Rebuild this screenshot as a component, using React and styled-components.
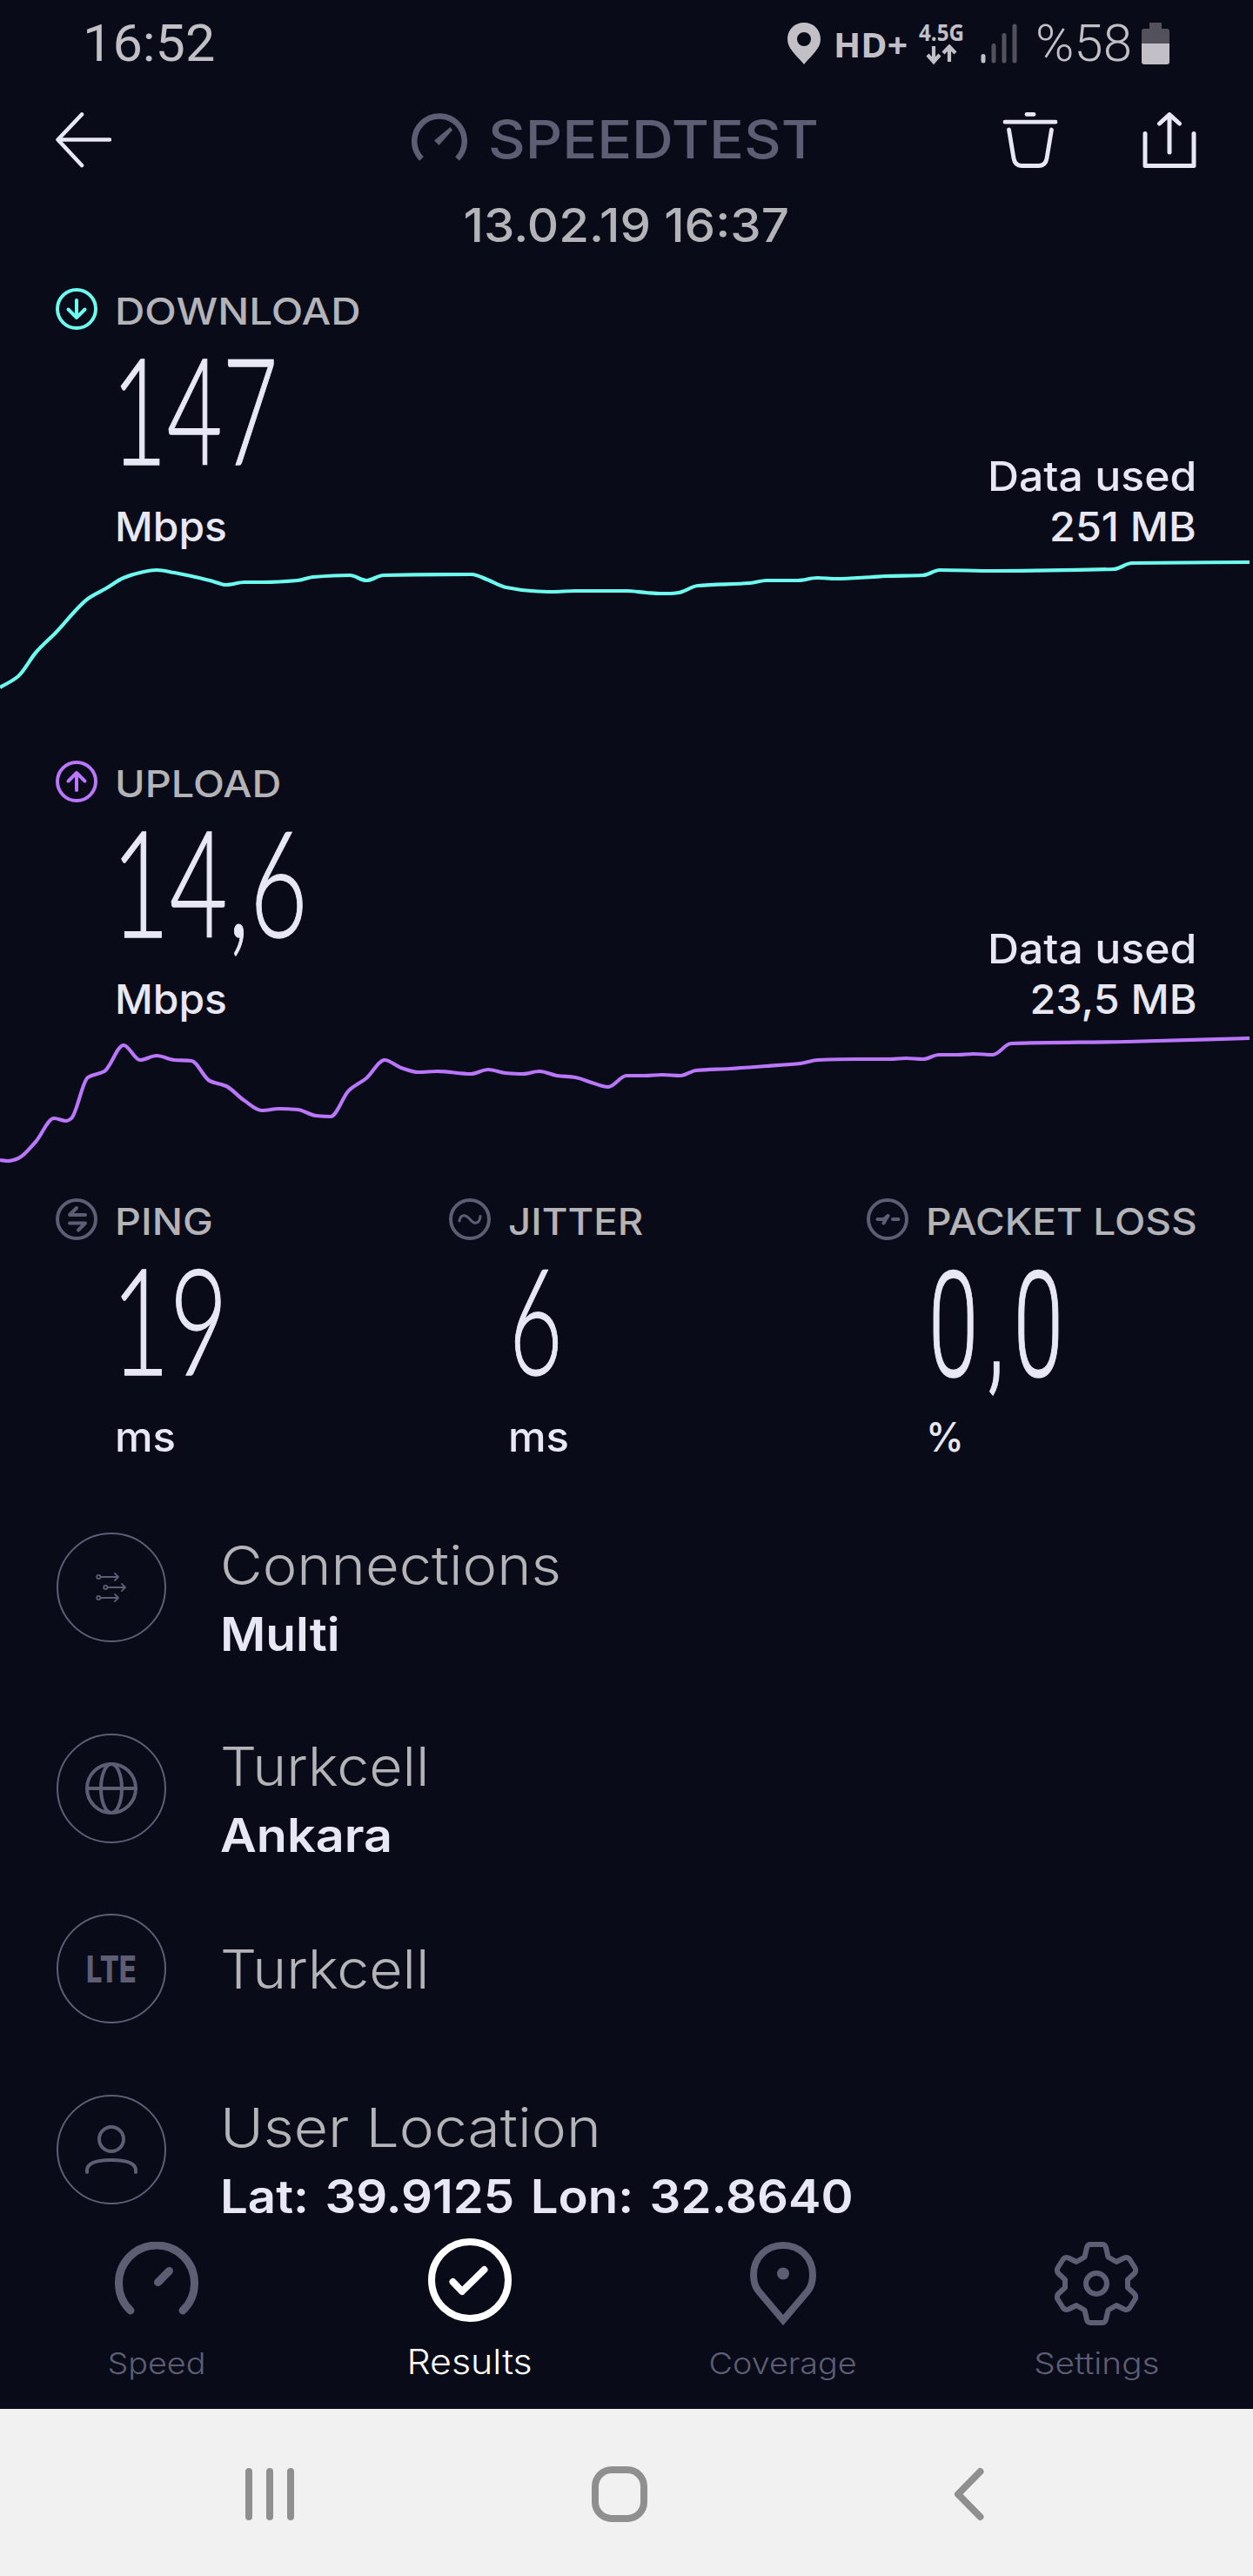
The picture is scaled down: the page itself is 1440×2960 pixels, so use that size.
import React from "react";
import styled, { createGlobalStyle, css } from "styled-components";

const color = {
  bg: "#090b19",
  dim: "#5d5e73",
  label: "#b3b3b8",
  text: "#e8e7f4",
  status: "#c2c0c6",
  statusDim: "#53525c",
  download: "#6dfbf0",
  upload: "#bb77fb",
  nav: "#f1f1f1",
  navIcon: "#8f8f8f",
};

const GlobalStyle = createGlobalStyle`
  body { margin: 0; background: ${color.bg}; }
  * { box-sizing: border-box; }
  svg { display: block; flex: none; }
`;

const Screen = styled.div`
  width: 1440px;
  height: 2960px;
  display: flex;
  flex-direction: column;
  overflow: hidden;
  background: ${color.bg};
  font-family: Inter, "Open Sans", sans-serif;
  color: ${color.text};
`;

/* Text drawn slightly wider or narrower than the family's natural width */
const stretched = css`
  display: block;
  width: max-content;
  white-space: nowrap;
  transform: scaleX(${(p) => p.$stretch || 1});
  transform-origin: ${(p) => p.$origin || "left"} center;
`;

/* ---------- status bar ---------- */

const StatusBar = styled.header`
  height: 100px;
  flex: none;
  display: flex;
  align-items: center;
  justify-content: space-between;
  padding: 0 96px 0 95px;
  color: ${color.status};
`;

const Clock = styled.span`
  ${stretched}
  font: 400 60px/100px Roboto, sans-serif;
`;

const StatusIcons = styled.div`
  display: flex;
  align-items: center;
  height: 100px;
`;

const HdLabel = styled.span`
  ${stretched}
  width: 81px;
  margin: 0 17px 0 15px;
  font: 700 39px/97px "Open Sans", sans-serif;
`;

const NetworkType = styled.div`
  display: flex;
  flex-direction: column;
  align-items: center;
  width: 52px;
  height: 50px;
  margin-right: 19px;
`;

const NetworkLabel = styled.span`
  ${stretched}
  margin-bottom: 2px;
  font: 700 26px/24px "Open Sans", sans-serif;
`;

const Percent = styled.span`
  ${stretched}
  width: 107px;
  margin: 0 15px 0 21px;
  font: 350 60px/100px Roboto, sans-serif;
`;

/* ---------- header ---------- */

const Header = styled.div`
  height: 120px;
  flex: none;
  display: grid;
  grid-template-columns: 1fr auto 1fr;
  align-items: center;
  padding: 0 64px;
`;

const Brand = styled.div`
  display: flex;
  align-items: center;
  width: 494px;
  gap: 24px;
  color: ${color.dim};
`;

const BrandName = styled.span`
  ${stretched}
  font-size: 61px;
  line-height: 121px;
  font-weight: 500;
`;

const Actions = styled.div`
  display: flex;
  justify-content: flex-end;
  gap: 96px;
`;

const TestDate = styled.div`
  ${stretched}
  align-self: center;
  flex: none;
  padding-top: 1px;
  font-size: 53px;
  line-height: 76px;
  font-weight: 550;
  color: ${color.label};
`;

/* ---------- measurements ---------- */

const SpeedBlock = styled.section`
  flex: none;
  padding-top: 34px;
`;

const SpeedRow = styled.div`
  display: flex;
  justify-content: space-between;
  align-items: flex-end;
  padding: 0 65px 0 64px;
`;

const Metric = styled.div`
  display: flex;
  gap: 20px;
`;

const MetricBody = styled.div`
  height: 303px;
`;

const Label = styled.div`
  ${stretched}
  font-size: 43px;
  line-height: 53px;
  font-weight: 500;
  color: ${color.label};
`;

const Value = styled.div`
  ${stretched}
  margin: -6px 0 16px ${(p) => p.$shift}px;
  font-family: Lato, sans-serif;
  font-weight: 300;
  font-size: 169px;
  line-height: 182px;
  -webkit-text-stroke: 1.300px currentColor;
  ${(p) =>
    p.$straight &&
    css`
      margin: 2px 0 8px ${p.$shift}px;
      font-family: Roboto, sans-serif;
      letter-spacing: 17px;
    `}
`;

const Unit = styled.div`
  ${stretched}
  font-size: 47px;
  line-height: 58px;
  font-weight: 550;
`;

const DataUsed = styled.div`
  display: flex;
  flex-direction: column;
  align-items: flex-end;
`;

const Metrics = styled.section`
  flex: none;
  display: grid;
  grid-template-columns: 452px 480px 1fr;
  padding: 35px 0 0 64px;
`;

/* ---------- connection details ---------- */

const Details = styled.section`
  flex: none;
  display: flex;
  flex-direction: column;
  height: 884px;
  padding: 78px 0 0 65px;
`;

const DetailRow = styled.div`
  display: flex;
  align-items: ${(p) => (p.$single ? "center" : "flex-start")};
  margin-bottom: ${(p) => p.$after || 0}px;
`;

const Badge = styled.div`
  flex: none;
  display: flex;
  align-items: center;
  justify-content: center;
  width: 126px;
  height: 126px;
  margin: ${(p) => (p.$single ? 0 : 3)}px 62px 0 0;
  border: 2px solid ${color.dim};
  border-radius: 50%;
  color: ${color.dim};
`;

const BadgeText = styled.span`
  ${stretched}
  font-size: 43px;
  font-weight: 800;
  line-height: 48px;
`;

const DetailTitle = styled.div`
  ${stretched}
  font-size: 62px;
  line-height: 81px;
  margin-bottom: -1px;
  font-weight: 330;
  color: ${color.label};
`;

const DetailValue = styled.div`
  ${stretched}
  font-size: 53px;
  line-height: 81px;
  word-spacing: 4px;
  font-weight: 600;
`;

/* ---------- tab bar and system navigation ---------- */

const TabBar = styled.nav`
  flex: none;
  height: 204px;
  display: grid;
  grid-template-columns: repeat(4, 1fr);
`;

const Tab = styled.div`
  display: flex;
  flex-direction: column;
  align-items: center;
  gap: ${(p) => (p.$active ? 18 : 16)}px;
  padding-top: ${(p) => (p.$active ? 8 : 12)}px;
  color: ${(p) => (p.$active ? "#fff" : color.dim)};
`;

const TabLabel = styled.span`
  ${stretched}
  font-size: ${(p) => (p.$active ? 39 : 34)}px;
  line-height: 56px;
  font-weight: ${(p) => (p.$active ? 360 : 330)};
`;

const SystemNav = styled.footer`
  flex: none;
  height: 192px;
  display: grid;
  grid-template-columns: 401px 415px auto;
  align-items: center;
  padding: 4px 0 0 278px;
  background: ${color.nav};
  color: ${color.navIcon};
`;

/* ---------- icons ---------- */

const Icon = ({ w, h = w, sw = 4, children, ...rest }) => (
  <svg width={w} height={h} viewBox={`0 0 ${w} ${h}`} fill="none" stroke="currentColor" strokeWidth={sw} strokeLinecap="round" strokeLinejoin="round" {...rest}>
    {children}
  </svg>
);

const PinSolid = () => (
  <Icon w={38} h={48} stroke="none">
    <path fill="currentColor" fillRule="evenodd" d="M19 0C8 0 0 8 0 19C0 30 10 37 19 48C28 37 38 30 38 19C38 8 30 0 19 0ZM19 11a8 8 0 1 1 0 16a8 8 0 1 1 0-16Z" />
  </Icon>
);

const DataArrows = () => (
  <Icon w={36} h={24} sw={4.200} strokeLinecap="butt" strokeLinejoin="miter">
    <path d="M9 2V19M2 12L9 20L16 12M27 20V3M20 10L27 2.500L34 10" />
  </Icon>
);

const Signal = () => (
  <Icon w={42} h={46} sw={5} color={color.statusDim}>
    <path d="M3 37.500V43" stroke={color.status} />
    <path d="M15 25.500V43M27 13.500V43M39 3V43" />
  </Icon>
);

const Battery = () => (
  <Icon w={32} h={48} stroke="none">
    <path fill={color.statusDim} d="M9 0H23V7H29Q32 7 32 10V24H0V10Q0 7 3 7H9Z" />
    <path fill="currentColor" d="M0 24H32V45Q32 48 29 48H3Q0 48 0 45Z" />
  </Icon>
);

const BackArrow = () => (
  <Icon w={64} h={64} sw={4.600}>
    <path d="M62 31.500H3M30 2.500L2.500 31.500L30 61" />
  </Icon>
);

const BrandGauge = () => (
  <Icon w={64} h={64} sw={6.500} strokeLinecap="butt">
    <path d="M11.500 53.500A28.800 28.800 0 1 1 52.500 53.500" />
    <path stroke="none" fill="currentColor" d="M26 32.500L44.500 17L47 20.500L31.500 38Z" />
  </Icon>
);

const Trash = () => (
  <Icon w={64} h={64} sw={4.800}>
    <path d="M28 2.400H36" />
    <path d="M3 11.200H61M7.500 20L13 53Q14.500 61.500 22 61.500H42Q49.500 61.500 51 53L56.500 20" />
  </Icon>
);

const Share = () => (
  <Icon w={64} h={64} sw={5}>
    <path d="M4 24.500V61.500H60V24.500M32 46V3M20.500 13L32 2.600L43.500 13" />
  </Icon>
);

const Ring = ({ tint, children }) => (
  <Icon w={48} sw={4} color={tint}>
    <circle cx="24" cy="24" r="22" />
    {children}
  </Icon>
);

const glyph = {
  down: <path d="M24 14V34M14.500 24.500L24 34L33.500 24.500" />,
  up: <path d="M24 34V14M14.500 23.500L24 14L33.500 23.500" />,
  ping: <path d="M34 19H16L24 11M16 28.500H34L26 36.500" />,
  jitter: <path strokeWidth="3" d="M12 26C13 18 19 18 24 24S35 30 36 20.500" />,
  loss: <path d="M12.500 24H19.500L24.500 20M24.500 20L19.500 28.500M30 24H36.500" />,
};

const Multi = () => (
  <Icon w={36} sw={1.800}>
    {[[0, 6], [8, 18], [0, 30]].map(([x, y]) => (
      <g key={y}>
        <circle cx={x + 3.300} cy={y} r="2.100" />
        <path d={`M${x + 6} ${y}H${x + 26}M${x + 22} ${y - 4}L${x + 26} ${y}L${x + 22} ${y + 4}`} />
      </g>
    ))}
  </Icon>
);

const Globe = () => (
  <Icon w={60} sw={4}>
    <circle cx="30" cy="30" r="28" />
    <ellipse cx="30" cy="30" rx="12" ry="28" />
    <path d="M2 30H58" />
  </Icon>
);

const Person = () => (
  <Icon w={62} h={58} sw={4}>
    <circle cx="31" cy="17" r="14" />
    <path d="M3 55V53C3 45 13 41 31 41S59 45 59 53V55" />
  </Icon>
);

const SpeedIcon = () => (
  <Icon w={96} sw={9}>
    <path d="M18 79A43.500 43.500 0 1 1 78 79" />
    <path d="M49.500 46.500L62.500 33.500" />
  </Icon>
);

const ResultsIcon = () => (
  <Icon w={96} sw={8}>
    <circle cx="48" cy="48" r="44" />
    <path d="M28.500 50L39 61L64.500 36" />
  </Icon>
);

const CoverageIcon = () => (
  <Icon w={96} sw={8} strokeLinejoin="miter">
    <path d="M48 90L20 57C15 51 14 44 14 38C14 18 29 4 48 4S82 18 82 38C82 44 81 51 76 57Z" />
    <circle cx="48" cy="36.500" r="7" fill="currentColor" stroke="none" />
  </Icon>
);

const SettingsIcon = () => (
  <Icon w={96} sw={6}>
    <circle cx="48" cy="48" r="12" />
    <path d="M41 3H55Q58 3 59 6.500L61.500 17.500L71 23L80 18.500Q84 17 86.500 20.500L92.500 30Q94 33 92 36L84 43.500V52.500L92 60Q94 63 92.500 66L86.500 75.500Q84 79 80 77.500L71 73L61.500 78.500L59 89.500Q58 93 55 93H41Q38 93 37 89.500L34.500 78.500L25 73L16 77.500Q12 79 9.500 75.500L3.500 66Q2 63 4 60L12 52.500V43.500L4 36Q2 33 3.500 30L9.500 20.500Q12 17 16 18.500L25 23L34.500 17.500L37 6.500Q38 3 41 3Z" />
  </Icon>
);

const Recents = () => (
  <Icon w={64} sw={8}>
    <path d="M8 6V58M32 6V58M56 6V58" />
  </Icon>
);

const Home = () => (
  <Icon w={66} sw={8}>
    <rect x="5" y="5" width="56" height="56" rx="19" />
  </Icon>
);

const Back = () => (
  <Icon w={38} h={64} sw={8}>
    <path d="M32.500 6L7 32L32.500 58" />
  </Icon>
);

/* ---------- charts ---------- */

const downloadPoints = [
  [0, 790], [21, 777], [41, 750], [64, 727], [101, 688], [122, 676], [142, 664], [161, 658], [180, 655], [200, 658], [220, 662], [241, 667], [260, 672], [281, 669], [303, 669], [342, 667], [360, 663], [402, 661], [421, 667], [441, 661], [542, 660], [560, 666], [582, 675], [611, 679], [634, 680], [661, 679], [720, 679], [743, 681], [759, 682], [770, 682], [780, 681], [802, 673], [862, 670], [881, 667], [917, 667], [939, 664], [961, 665], [1002, 663], [1018, 662], [1061, 661], [1080, 655], [1142, 656], [1280, 654], [1301, 647], [1436, 646],
].map(([x, y]) => [x, y - 634]);

const uploadPoints = [
  [0, 1333], [9, 1334], [21, 1331], [41, 1312], [62, 1285], [76, 1288], [82, 1285], [101, 1238], [120, 1231], [142, 1201], [161, 1218], [180, 1213], [200, 1218], [220, 1219], [241, 1242], [260, 1248], [280, 1264], [301, 1276], [321, 1274], [342, 1275], [363, 1282], [380, 1283], [401, 1253], [421, 1239], [442, 1218], [461, 1227], [481, 1232], [503, 1231], [541, 1234], [561, 1229], [581, 1233], [601, 1234], [620, 1231], [640, 1236], [661, 1238], [680, 1244], [699, 1249], [720, 1236], [741, 1236], [761, 1235], [782, 1236], [800, 1230], [839, 1228], [881, 1225], [920, 1222], [940, 1218], [986, 1217], [1023, 1217], [1041, 1216], [1061, 1217], [1079, 1212], [1101, 1212], [1119, 1211], [1141, 1212], [1162, 1199], [1294, 1197], [1436, 1193],
].map(([x, y]) => [x, y - 1177]);

/* Monotone cubic interpolation through the samples */
function smoothPath(pts) {
  const n = pts.length;
  const slope = [];
  for (let i = 0; i < n - 1; i++) slope.push((pts[i + 1][1] - pts[i][1]) / (pts[i + 1][0] - pts[i][0]));
  const tan = pts.map((_, i) => {
    if (i === 0) return slope[0];
    if (i === n - 1) return slope[n - 2];
    const a = slope[i - 1];
    const b = slope[i];
    return a * b <= 0 ? 0 : (2 * a * b) / (a + b);
  });
  let d = `M${pts[0][0]} ${pts[0][1]}`;
  for (let i = 0; i < n - 1; i++) {
    const [x0, y0] = pts[i];
    const [x1, y1] = pts[i + 1];
    const h = (x1 - x0) / 3;
    d += `C${x0 + h} ${y0 + tan[i] * h} ${x1 - h} ${y1 - tan[i + 1] * h} ${x1} ${y1}`;
  }
  return d;
}

const Chart = ({ points, tint, height }) => (
  <Icon w={1440} h={height} sw={4.200} color={tint} strokeLinecap="butt">
    <path d={smoothPath(points)} />
  </Icon>
);

/* ---------- composed parts ---------- */

const MetricView = ({ icon, tint = color.dim, label, value, unit, straight }) => (
  <Metric>
    <Ring tint={tint}>{glyph[icon]}</Ring>
    <MetricBody>
      <Label $stretch={label[1]}>{label[0]}</Label>
      <Value $stretch={value[1]} $shift={value[2]} $straight={straight}>{value[0]}</Value>
      <Unit $stretch={unit[1]}>{unit[0]}</Unit>
    </MetricBody>
  </Metric>
);

const Speed = ({ used, points, tint, height, ...metric }) => (
  <SpeedBlock>
    <SpeedRow>
      <MetricView tint={tint} {...metric} />
      <DataUsed>
        <Unit $stretch={1.062} $origin="right">Data used</Unit>
        <Unit $stretch={1.03} $origin="right">{used}</Unit>
      </DataUsed>
    </SpeedRow>
    <Chart points={points} tint={tint} height={height} />
  </SpeedBlock>
);

const Detail = ({ icon, title, value, after }) => (
  <DetailRow $single={!value} $after={after}>
    <Badge $single={!value}>{icon}</Badge>
    <div>
      <DetailTitle $stretch={title[1]}>{title[0]}</DetailTitle>
      {value && <DetailValue $stretch={value[1]}>{value[0]}</DetailValue>}
    </div>
  </DetailRow>
);

const TabItem = ({ icon, label, stretch, active }) => (
  <Tab $active={active}>
    {icon}
    <TabLabel $active={active} $stretch={stretch} $origin="center">{label}</TabLabel>
  </Tab>
);

export default function App() {
  return (
    <Screen>
      <GlobalStyle />
      <StatusBar>
        <Clock $stretch={1.02}>16:52</Clock>
        <StatusIcons>
          <PinSolid />
          <HdLabel $stretch={1.05}>HD+</HdLabel>
          <NetworkType>
            <NetworkLabel $stretch={0.93} $origin="center">4.5G</NetworkLabel>
            <DataArrows />
          </NetworkType>
          <Signal />
          <Percent>%58</Percent>
          <Battery />
        </StatusIcons>
      </StatusBar>

      <Header>
        <BackArrow />
        <Brand>
          <BrandGauge />
          <BrandName $stretch={1.085}>SPEEDTEST</BrandName>
        </Brand>
        <Actions>
          <Trash />
          <Share />
        </Actions>
      </Header>
      <TestDate $stretch={1.065} $origin="center">13.02.19 16:37</TestDate>

      <Speed icon="down" tint={color.download} label={["DOWNLOAD", 1.107]} value={["147", 0.651, -4]} unit={["Mbps", 1.02]} used="251 MB" points={downloadPoints} height={206} />
      <Speed icon="up" tint={color.upload} label={["UPLOAD", 1.09]} value={["14,6", 0.682, -4]} unit={["Mbps", 1.02]} used="23,5 MB" points={uploadPoints} height={165} />

      <Metrics>
        <MetricView icon="ping" label={["PING", 1.085]} value={["19", 0.683, -4]} unit={["ms", 1.045]} />
        <MetricView icon="jitter" label={["JITTER", 1.06]} value={["6", 0.63, 1]} unit={["ms", 1.045]} />
        <MetricView icon="loss" label={["PACKET LOSS", 1.07]} value={["0,0", 0.61, 3]} unit={["%", 0.94]} straight />
      </Metrics>

      <Details>
        <Detail icon={<Multi />} title={["Connections", 1.078]} value={["Multi", 1.07]} after={70} />
        <Detail icon={<Globe />} title={["Turkcell", 1.068]} value={["Ankara", 1.084]} after={49} />
        <Detail icon={<BadgeText $stretch={0.76} $origin="center">LTE</BadgeText>} title={["Turkcell", 1.068]} after={79} />
        <Detail icon={<Person />} title={["User Location", 1.093]} value={["Lat: 39.9125 Lon: 32.8640", 1.062]} />
      </Details>

      <TabBar>
        <TabItem icon={<SpeedIcon />} label="Speed" stretch={1.11} />
        <TabItem icon={<ResultsIcon />} label="Results" stretch={1.1} active />
        <TabItem icon={<CoverageIcon />} label="Coverage" stretch={1.11} />
        <TabItem icon={<SettingsIcon />} label="Settings" stretch={1.14} />
      </TabBar>

      <SystemNav>
        <Recents />
        <Home />
        <Back />
      </SystemNav>
    </Screen>
  );
}
